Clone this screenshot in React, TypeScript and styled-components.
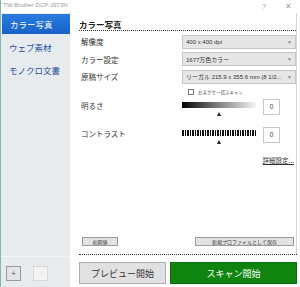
import React from 'react';
import styled, { createGlobalStyle } from 'styled-components';

const GlobalStyle = createGlobalStyle`
	html, body {
		margin: 0;
		padding: 0;
		background: #fff;
	}
	body {
		font-family: 'Noto Sans CJK JP', 'Noto Sans', sans-serif;
	}
`;

const Window = styled.div`
	width: 300px;
	height: 287px;
	display: flex;
	flex-direction: column;
	background: #fff;
	border-left: 1px solid #7fb8b0;
	box-sizing: border-box;
	overflow: hidden;
`;

const TitleBar = styled.div`
	height: 13px;
	display: flex;
	align-items: center;
	padding-left: 2px;
	color: #9a9a9a;
	font-size: 6px;
	font-family: 'Liberation Sans', sans-serif;
`;

const TitleText = styled.span`
	flex: 1;
	margin-top: -3px;
`;

const TitleButton = styled.span`
	width: 24px;
	text-align: center;
	font-size: 8px;
	color: #a0a0a0;
`;

const Body = styled.div`
	flex: 1;
	display: flex;
	min-height: 0;
`;

const Sidebar = styled.nav`
	width: 69px;
	background: #e8ebee;
	display: flex;
	flex-direction: column;
`;

const NavList = styled.div`
	flex: 1;
	display: flex;
	flex-direction: column;
	padding-top: 1px;
`;

const NavItem = styled.div<{ $active?: boolean }>`
	height: 20px;
	margin-bottom: 3px;
	display: flex;
	align-items: center;
	padding-left: 8px;
	font-size: 8.5px;
	color: ${(p) => (p.$active ? '#fff' : '#1f4fa0')};
	background: ${(p) => (p.$active ? 'linear-gradient(#2a7be0, #1862c8)' : 'transparent')};
	margin-left: ${(p) => (p.$active ? '1px' : '0')};
`;

const SidebarFooter = styled.div`
	height: 31px;
	border-top: 1px solid #f4f5f6;
	display: flex;
	align-items: center;
	gap: 12px;
	padding: 2px 0 0 5px;
	box-sizing: border-box;
`;

const SquareButton = styled.div<{ $disabled?: boolean }>`
	width: 15px;
	height: 15px;
	box-sizing: border-box;
	border: 1px solid ${(p) => (p.$disabled ? '#d8d8d8' : '#9a9a9a')};
	background: ${(p) => (p.$disabled ? '#f3f3f3' : '#e4e4e4')};
	display: flex;
	align-items: center;
	justify-content: center;
	font-size: 7px;
	color: ${(p) => (p.$disabled ? '#c8c8c8' : '#444')};
	font-family: 'Liberation Sans', sans-serif;
`;

const Main = styled.main`
	flex: 1;
	display: flex;
	flex-direction: column;
	padding: 0 4px 3px 9px;
	min-width: 0;
`;

const Panel = styled.div`
	flex: 1;
	display: flex;
	flex-direction: column;
	border-right: 1px solid #d4d4d4;
	margin-right: -1px;
`;

const Heading = styled.div`
	font-size: 8.5px;
	font-weight: bold;
	color: #222;
	height: 17px;
	line-height: 22px;
	border-bottom: 1px dotted #333;
	margin-bottom: 2px;
`;

const FormRow = styled.div`
	height: 17.5px;
	display: flex;
	align-items: center;
	padding-left: 2px;
`;

const Label = styled.div`
	width: 101px;
	font-size: 7.5px;
	color: #333;
`;

const Select = styled.div`
	flex: 1;
	min-width: 0;
	height: 14px;
	box-sizing: border-box;
	border: 1px solid #c6c6c6;
	background: #e6e6e6;
	display: flex;
	align-items: center;
	padding: 0 3px;
	font-size: 6px;
	color: #333;
	font-family: 'Liberation Sans', 'Noto Sans CJK JP', sans-serif;
	white-space: nowrap;
	overflow: hidden;
`;

const SelectText = styled.span`
	flex: 1;
	min-width: 0;
	overflow: hidden;
`;

const Caret = styled.span`
	flex: none;
	font-size: 5px;
	color: #888;
	margin-left: 3px;
`;

const CheckRow = styled.div`
	display: flex;
	align-items: center;
	gap: 4px;
	padding-left: 109px;
	height: 13px;
	font-size: 4.5px;
	color: #555;
`;

const CheckBox = styled.span`
	width: 6px;
	height: 6px;
	box-sizing: border-box;
	border: 1px solid #777;
	background: #fff;
`;

const SliderRow = styled.div`
	height: 28px;
	display: flex;
	align-items: flex-start;
	padding-left: 2px;
`;

const SliderLabel = styled(Label)`
	padding-top: 1px;
`;

const SliderTrack = styled.div`
	width: 74px;
	display: flex;
	flex-direction: column;
	align-items: center;
	padding-top: 3px;
`;

const Bar = styled.div<{ $kind: 'gradient' | 'stripes' }>`
	width: 74px;
	height: 6px;
	background: ${(p) =>
		p.$kind === 'gradient'
			? 'linear-gradient(to right, #000, #777 45%, #f4f4f4)'
			: 'repeating-linear-gradient(to right, #111 0 1.7px, #fff 1.7px 2.5px)'};
`;

const Thumb = styled.div`
	width: 0;
	height: 0;
	margin-top: 4px;
	border-left: 2.5px solid transparent;
	border-right: 2.5px solid transparent;
	border-bottom: 4px solid #222;
`;

const ValueBox = styled.div`
	width: 17px;
	height: 16px;
	margin-left: 7px;
	box-sizing: border-box;
	border: 1px solid #c8c8c8;
	display: flex;
	align-items: center;
	justify-content: center;
	font-size: 6.5px;
	color: #333;
	font-family: 'Liberation Sans', sans-serif;
`;

const LinkRow = styled.div`
	display: flex;
	justify-content: flex-end;
	padding-right: 2px;
`;

const DetailLink = styled.span`
	font-size: 6.5px;
	color: #333;
	text-decoration: underline;
`;

const Spacer = styled.div`
	flex: 1;
`;

const ProfileRow = styled.div`
	display: flex;
	justify-content: space-between;
	padding: 0 2px 0 3px;
	margin-bottom: 8px;
`;

const SmallButton = styled.div<{ $width: number }>`
	width: ${(p) => p.$width}px;
	height: 9px;
	box-sizing: border-box;
	border: 1px solid #9c9c9c;
	background: #e2e2e2;
	display: flex;
	align-items: center;
	justify-content: center;
	font-size: 5px;
	color: #333;
`;

const Divider = styled.div`
	border-top: 1px dotted #333;
	margin-right: -1px;
`;

const ActionRow = styled.div`
	display: flex;
	gap: 4px;
	padding-top: 7px;
	margin-right: -1px;
`;

const ActionButton = styled.div<{ $primary?: boolean }>`
	height: 22px;
	flex: ${(p) => (p.$primary ? '0 0 127px' : '1')};
	box-sizing: border-box;
	border: 1px solid ${(p) => (p.$primary ? '#0d6e0d' : '#adadad')};
	background: ${(p) => (p.$primary ? '#0f850f' : '#e1e1e1')};
	color: ${(p) => (p.$primary ? '#fff' : '#333')};
	display: flex;
	align-items: center;
	justify-content: center;
	font-size: 9px;
`;

const App = () => {
	return (
		<>
			<GlobalStyle />
			<Window>
				<TitleBar>
					<TitleText>TW-Brother DCP-J973N</TitleText>
					<TitleButton>?</TitleButton>
					<TitleButton>✕</TitleButton>
				</TitleBar>
				<Body>
					<Sidebar>
						<NavList>
							<NavItem $active>カラー写真</NavItem>
							<NavItem>ウェブ素材</NavItem>
							<NavItem>モノクロ文書</NavItem>
						</NavList>
						<SidebarFooter>
							<SquareButton>+</SquareButton>
							<SquareButton $disabled>−</SquareButton>
						</SidebarFooter>
					</Sidebar>
					<Main>
						<Panel>
							<Heading>カラー写真</Heading>
							<FormRow>
								<Label>解像度</Label>
								<Select>
									<SelectText>400 x 400 dpi</SelectText>
									<Caret>▼</Caret>
								</Select>
							</FormRow>
							<FormRow>
								<Label>カラー設定</Label>
								<Select>
									<SelectText>1677万色カラー</SelectText>
									<Caret>▼</Caret>
								</Select>
							</FormRow>
							<FormRow>
								<Label>原稿サイズ</Label>
								<Select>
									<SelectText>リーガル 215.9 x 355.6 mm (8 1/2...</SelectText>
									<Caret>▼</Caret>
								</Select>
							</FormRow>
							<CheckRow>
								<CheckBox />
								おまかせ一括スキャン
							</CheckRow>
							<SliderRow>
								<SliderLabel>明るさ</SliderLabel>
								<SliderTrack>
									<Bar $kind="gradient" />
									<Thumb />
								</SliderTrack>
								<ValueBox>0</ValueBox>
							</SliderRow>
							<SliderRow>
								<SliderLabel>コントラスト</SliderLabel>
								<SliderTrack>
									<Bar $kind="stripes" />
									<Thumb />
								</SliderTrack>
								<ValueBox>0</ValueBox>
							</SliderRow>
							<LinkRow>
								<DetailLink>詳細設定...</DetailLink>
							</LinkRow>
							<Spacer />
							<ProfileRow>
								<SmallButton $width={36}>初期値</SmallButton>
								<SmallButton $width={99}>新規プロファイルとして保存</SmallButton>
							</ProfileRow>
						</Panel>
						<Divider />
						<ActionRow>
							<ActionButton>プレビュー開始</ActionButton>
							<ActionButton $primary>スキャン開始</ActionButton>
						</ActionRow>
					</Main>
				</Body>
			</Window>
		</>
	);
};

export default App;
